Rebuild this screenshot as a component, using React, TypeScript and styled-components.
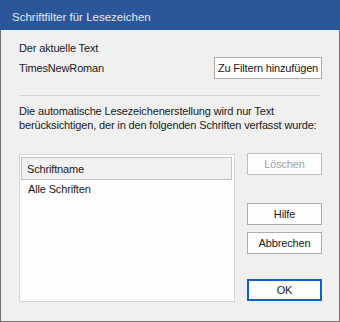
import React from 'react';
import styled, { createGlobalStyle } from 'styled-components';

const GlobalStyle = createGlobalStyle`
    html, body {
        margin: 0;
        padding: 0;
        background: #f0f0f0;
    }
    * {
        box-sizing: border-box;
    }
`;

const App: React.FC = () => {
    return (
        <>
            <GlobalStyle />
            <Window>
                <TitleBar>Schriftfilter für Lesezeichen</TitleBar>
                <Body>
                    <Label>Der aktuelle Text</Label>
                    <FontRow>
                        <Label>TimesNewRoman</Label>
                        <Button $wide>Zu Filtern hinzufügen</Button>
                    </FontRow>
                    <Separator />
                    <Paragraph>
                        Die automatische Lesezeichenerstellung wird nur Text
                        <br />
                        berücksichtigen, der in den folgenden Schriften verfasst wurde:
                    </Paragraph>
                    <Main>
                        <ListBox>
                            <ListHeader>Schriftname</ListHeader>
                            <ListItem>Alle Schriften</ListItem>
                        </ListBox>
                        <ButtonColumn>
                            <Button disabled>Löschen</Button>
                            <Button $gap={28}>Hilfe</Button>
                            <Button $gap={7}>Abbrechen</Button>
                            <Button $gap={25} $primary>
                                OK
                            </Button>
                        </ButtonColumn>
                    </Main>
                </Body>
            </Window>
        </>
    );
};

const Window = styled.div`
    width: 340px;
    height: 322px;
    border: 1px solid #707070;
    border-top: none;
    background: #f0f0f0;
    display: flex;
    flex-direction: column;
    font-family: 'Liberation Sans', Arial, sans-serif;
    font-size: 11px;
    letter-spacing: -0.15px;
    color: #1a1a1a;
    white-space: nowrap;
`;

const TitleBar = styled.div`
    height: 30px;
    margin: 0 -1px;
    background: #2b579a;
    color: #e3e9f2;
    display: flex;
    align-items: center;
    padding: 3px 0 0 12px;
    font-size: 11.5px;
    letter-spacing: 0;
`;

const Body = styled.div`
    flex: 1;
    display: flex;
    flex-direction: column;
    padding: 11px 17px 0 18px;
`;

const Label = styled.div`
    line-height: 15px;
`;

const FontRow = styled.div`
    display: flex;
    align-items: center;
    justify-content: space-between;
    margin-top: 1px;
`;

const Separator = styled.div`
    height: 1px;
    background: #d5d5d5;
    margin: 16px 2px 0 0;
`;

const Paragraph = styled.div`
    line-height: 14px;
    margin-top: 8px;
`;

const Main = styled.div`
    display: flex;
    justify-content: space-between;
    align-items: flex-start;
    margin-top: 22px;
`;

const ListBox = styled.div`
    width: 216px;
    height: 148px;
    background: #fdfdfd;
    border: 1px solid #d6d6d6;
    padding: 2px 2px 0 1px;
`;

const ListHeader = styled.div`
    height: 23px;
    background: #f1f1f1;
    border: 1px solid #c2c2c2;
    display: flex;
    align-items: center;
    padding-left: 5px;
`;

const ListItem = styled.div`
    padding: 2px 0 0 7px;
    line-height: 15px;
`;

const ButtonColumn = styled.div`
    display: flex;
    flex-direction: column;
    margin-top: -1px;
`;

const Button = styled.button<{ $wide?: boolean; $gap?: number; $primary?: boolean }>`
    width: ${(p) => (p.$wide ? '108px' : '75px')};
    height: 22px;
    margin-top: ${(p) => (p.$gap ? `${p.$gap}px` : '0')};
    padding: 0;
    background: #fdfdfd;
    border: ${(p) => (p.$primary ? '2px solid #0f62c4' : '1px solid #adadad')};
    font-family: 'Liberation Sans', Arial, sans-serif;
    font-size: 11px;
    letter-spacing: -0.15px;
    color: #1a1a1a;
    white-space: nowrap;

    &:disabled {
        color: #a0a0a0;
        border-color: #bfbfbf;
    }
`;

export default App;
